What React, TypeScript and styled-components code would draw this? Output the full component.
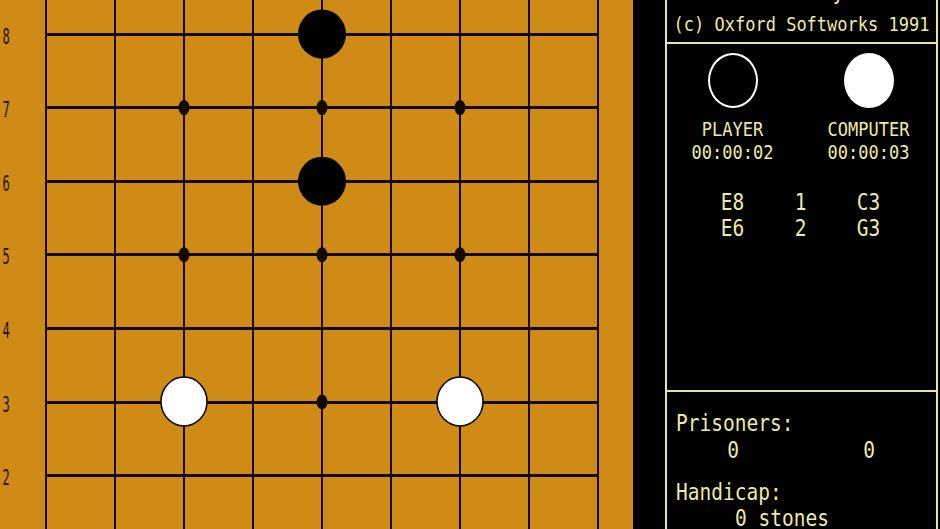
import React from "react";
import styled, { createGlobalStyle, css } from "styled-components";

const ORANGE = "#D08A16";
const INK = "#EFEBA2";
const BORDER = "#EAE69E";

const GlobalStyle = createGlobalStyle`
  html, body { margin: 0; padding: 0; background: #000; overflow: hidden; }
  #root { width: 940px; height: 529px; }
`;

const Screen = styled.div`
  display: flex;
  width: 940px;
  height: 529px;
  overflow: hidden;
  background: #000;
`;

const BoardArea = styled.div`
  flex: none;
  width: 633px;
  height: 529px;
  background: ${ORANGE};
  overflow: hidden;
`;

const Panel = styled.div`
  flex: 1;
  display: flex;
  padding: 0 2px 0 32px;
  background: #000;
`;

const Frame = styled.div`
  flex: 1;
  display: flex;
  flex-direction: column;
  border-left: 2px solid ${BORDER};
  border-right: 2px solid ${BORDER};
  overflow: hidden;
`;

const TitleBar = styled.div`
  flex: none;
  height: 42px;
  border-bottom: 2px solid ${BORDER};
  display: flex;
  flex-direction: column;
  align-items: center;
`;

const InfoSection = styled.div`
  flex: none;
  height: 348px;
  border-bottom: 2px solid ${BORDER};
  display: flex;
  flex-direction: column;
  padding-top: 9px;
  box-sizing: border-box;
`;

const StatsSection = styled.div`
  flex: 1;
  display: flex;
  flex-direction: column;
  padding: 19px 0 0 9px;
`;

const textBase = css`
  display: inline-block;
  font-family: "DejaVu Sans Mono", "Liberation Mono", monospace;
  color: ${INK};
  white-space: pre;
  transform: scaleY(1.18);
`;

const SmallText = styled.span<{ $mt?: number }>`
  ${textBase};
  font-size: 17px;
  line-height: 23px;
  margin-top: ${(p) => p.$mt ?? 0}px;
`;

const LargeText = styled.span<{ $mt?: number; $indent?: number; $lh?: number }>`
  ${textBase};
  font-size: 19.5px;
  line-height: ${(p) => p.$lh ?? 26}px;
  margin-top: ${(p) => p.$mt ?? 0}px;
  padding-left: ${(p) => p.$indent ?? 0}px;
`;

const GameTitle = styled(SmallText)`
  font-size: 19px;
  margin-left: 28px;
`;

const Players = styled.div`
  display: flex;
  justify-content: center;
  gap: 16px;
  padding-right: 2px;
`;

const PlayerBlock = styled.div`
  width: 120px;
  display: flex;
  flex-direction: column;
  align-items: center;
`;

const Stone = styled.div<{ $filled?: boolean }>`
  width: 50px;
  height: 55px;
  box-sizing: border-box;
  border-radius: 50%;
  border: 2px solid #fff;
  background: ${(p) => (p.$filled ? "#fff" : "transparent")};
  margin-bottom: 10px;
`;

const MoveGrid = styled.div`
  display: grid;
  grid-template-columns: repeat(3, 68px);
  justify-content: center;
  justify-items: center;
  margin-top: 26px;
  padding-right: 2px;
`;

const ValueRow = styled.div`
  display: grid;
  grid-template-columns: repeat(3, 68px);
  margin-left: 23px;
  justify-items: center;
  margin-top: 1px;
`;

const COL_X = Array.from({ length: 9 }, (_, i) => Math.round(46 + i * 69.05));
const ROW_Y = [-39.6, 34, 107.6, 181.2, 254.8, 328.4, 402, 475.6, 549.2];
const ROW_LABELS = [
  { n: "8", y: 34 },
  { n: "7", y: 107.6 },
  { n: "6", y: 181.2 },
  { n: "5", y: 254.8 },
  { n: "4", y: 328.4 },
  { n: "3", y: 402 },
  { n: "2", y: 475.6 },
];
const col = (c: string) => COL_X["ABCDEFGHJ".indexOf(c)];
const row = (r: number) => 34 + (8 - r) * 73.6;

const HOSHI: [string, number][] = [
  ["C", 7], ["E", 7], ["G", 7],
  ["C", 5], ["E", 5], ["G", 5],
  ["E", 3],
];
const STONES: { c: string; r: number; black: boolean }[] = [
  { c: "E", r: 8, black: true },
  { c: "E", r: 6, black: true },
  { c: "C", r: 3, black: false },
  { c: "G", r: 3, black: false },
];

const MOVES = [
  ["E8", "1", "C3"],
  ["E6", "2", "G3"],
];

function Board() {
  return (
    <svg width={633} height={529} viewBox="0 0 633 529">
      <g shapeRendering="crispEdges" stroke="#120a00">
        {COL_X.map((x) => (
          <line key={x} x1={x} y1={0} x2={x} y2={529} strokeWidth={2} />
        ))}
        {ROW_Y.map((y) => (
          <line key={y} x1={46} y1={y} x2={599} y2={y} strokeWidth={3} />
        ))}
      </g>
      {HOSHI.map(([c, r]) => (
        <ellipse key={c + r} cx={col(c)} cy={row(r)} rx={5.5} ry={7.5} fill="#120a00" />
      ))}
      {STONES.map((s) =>
        s.black ? (
          <ellipse key={s.c + s.r} cx={col(s.c)} cy={row(s.r)} rx={24} ry={24.5} fill="#000" />
        ) : (
          <ellipse
            key={s.c + s.r}
            cx={col(s.c)}
            cy={row(s.r) - 0.5}
            rx={23}
            ry={24.5}
            fill="#fff"
            stroke="#000"
            strokeWidth={1.5}
          />
        )
      )}
      {ROW_LABELS.map((l) => (
        <text
          key={l.n}
          transform={`translate(2.5 ${l.y + 9.5}) scale(0.55 1)`}
          fontFamily="DejaVu Sans Mono, monospace"
          fontSize={22}
          fill="#1a0e00"
        >
          {l.n}
        </text>
      ))}
    </svg>
  );
}

export default function App() {
  return (
    <>
      <GlobalStyle />
      <Screen>
        <BoardArea>
          <Board />
        </BoardArea>
        <Panel>
          <Frame>
            <TitleBar>
              <GameTitle $mt={-20}>Go Player</GameTitle>
              <SmallText $mt={10}>(c) Oxford Softworks 1991</SmallText>
            </TitleBar>
            <InfoSection>
              <Players>
                <PlayerBlock>
                  <Stone />
                  <SmallText>PLAYER</SmallText>
                  <SmallText>00:00:02</SmallText>
                </PlayerBlock>
                <PlayerBlock>
                  <Stone $filled />
                  <SmallText>COMPUTER</SmallText>
                  <SmallText>00:00:03</SmallText>
                </PlayerBlock>
              </Players>
              <MoveGrid>
                {MOVES.map((m) =>
                  m.map((cell, i) => <LargeText key={m[1] + i}>{cell}</LargeText>)
                )}
              </MoveGrid>
            </InfoSection>
            <StatsSection>
              <LargeText>Prisoners:</LargeText>
              <ValueRow>
                <LargeText>0</LargeText>
                <span />
                <LargeText>0</LargeText>
              </ValueRow>
              <LargeText $mt={16}>Handicap:</LargeText>
              <LargeText $indent={59} $lh={20} $mt={3}>0 stones</LargeText>
            </StatsSection>
          </Frame>
        </Panel>
      </Screen>
    </>
  );
}
